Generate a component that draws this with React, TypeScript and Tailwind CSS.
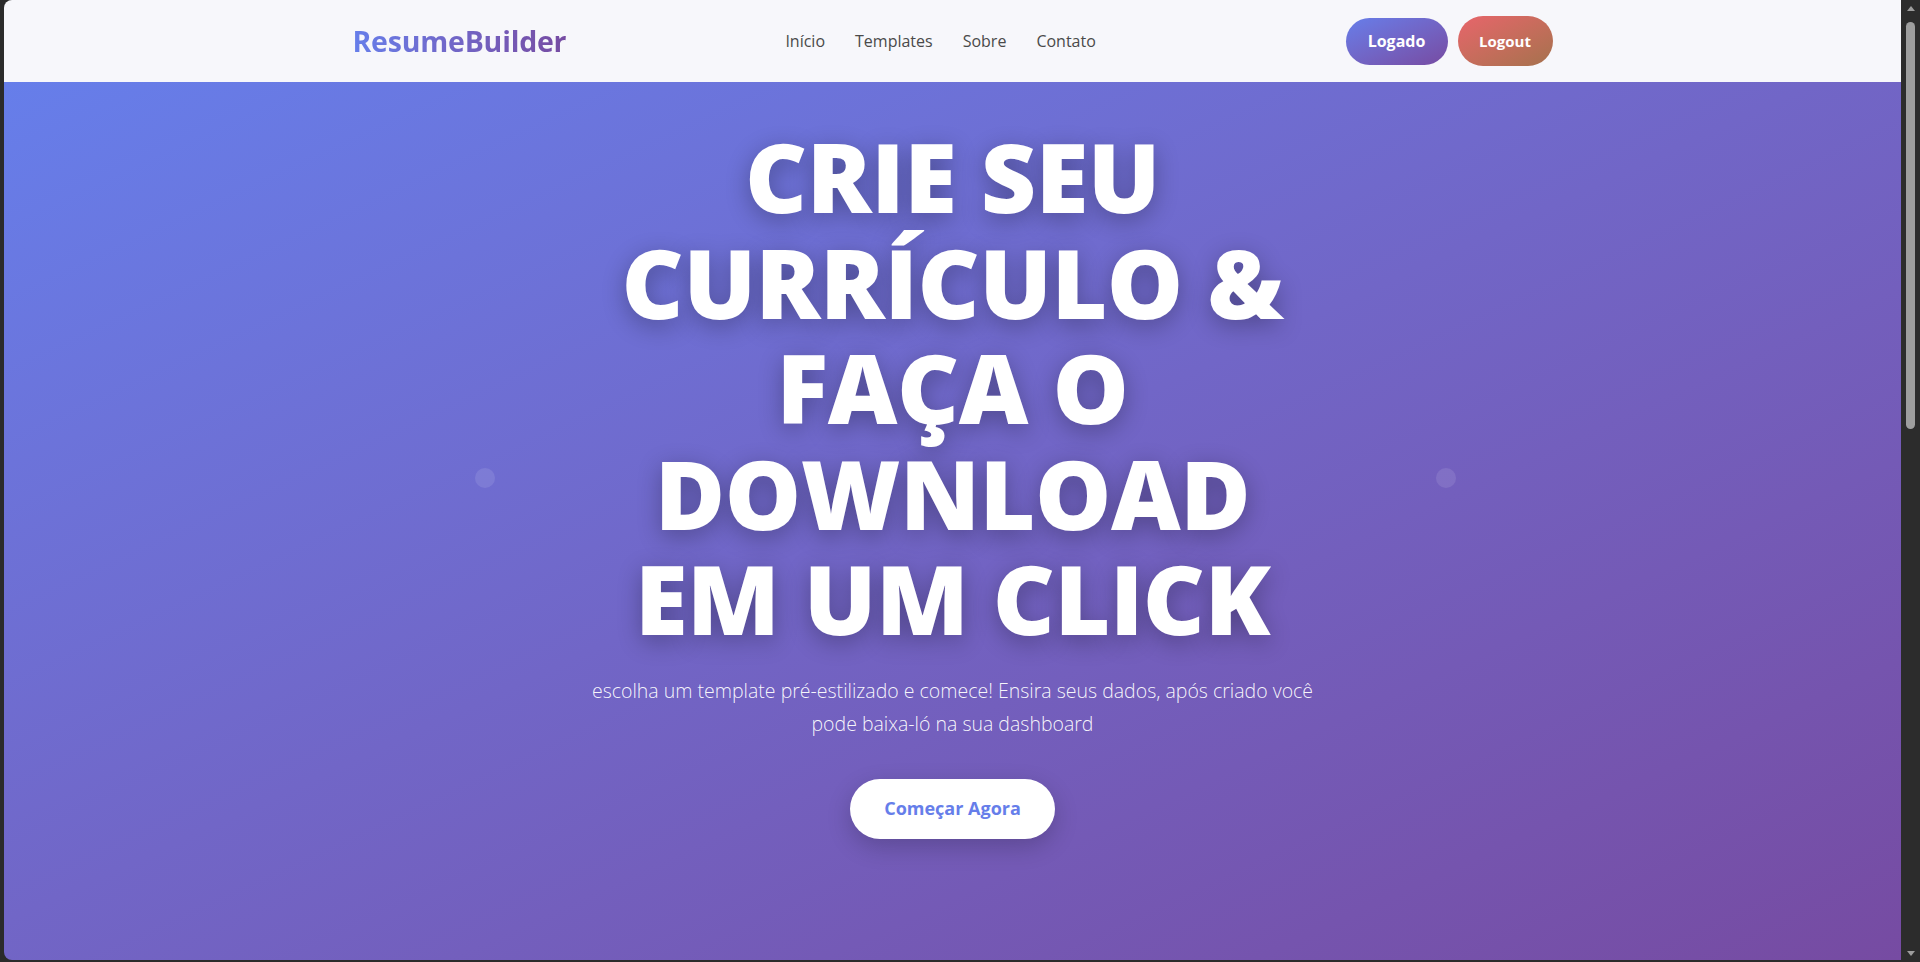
import React from 'react';

const navLinks = ['Início', 'Templates', 'Sobre', 'Contato'];

const Header: React.FC = () => (
  <header className="h-[82px] shrink-0 bg-[#f7f7fb] shadow-[0_2px_10px_rgba(0,0,0,0.05)]">
    <div className="mx-auto flex h-full w-[1200px] items-center">
      <span className="bg-gradient-to-r from-[#667eea] to-[#764ba2] bg-clip-text text-[28.5px] font-bold tracking-[-0.2px] text-transparent">
        ResumeBuilder
      </span>
      <nav className="ml-[219px] flex gap-[30px]">
        {navLinks.map((link) => (
          <a key={link} href="#" className="text-[16px] font-medium text-[#4a4a4a]">
            {link}
          </a>
        ))}
      </nav>
      <div className="ml-auto flex items-center gap-[10px]">
        <button className="h-[47px] w-[102px] rounded-full bg-gradient-to-br from-[#667eea] to-[#764ba2] text-[16px] font-bold text-white">
          Logado
        </button>
        <button className="h-[50px] w-[95px] rounded-full bg-gradient-to-br from-[#e8646b] to-[#a5714d] text-[15px] font-bold text-white">
          Logout
        </button>
      </div>
    </div>
  </header>
);

const Hero: React.FC = () => (
  <section className="relative flex flex-1 flex-col items-center bg-gradient-to-br from-[#667eea] to-[#764ba2] pt-[41px]">
    <div className="absolute left-[471px] top-[386px] h-5 w-5 rounded-full bg-white/10" />
    <div className="absolute left-[1432px] top-[386px] h-5 w-5 rounded-full bg-white/10" />
    <h1 className="text-center text-[96px] font-extrabold uppercase leading-[1.1] tracking-[-0.5px] text-white [text-shadow:0_6px_24px_rgba(0,0,0,0.3)]">
      <span className="block">Crie seu</span>
      <span className="block">currículo &amp;</span>
      <span className="block">faça o</span>
      <span className="block">download</span>
      <span className="block">em um click</span>
    </h1>
    <p className="mt-[23px] text-center text-[19.5px] font-light leading-[33px] text-white/95">
      escolha um template pré-estilizado e comece! Ensira seus dados, após criado você
      <br />
      pode baixa-ló na sua dashboard
    </p>
    <button className="mt-[39px] h-[60px] w-[205px] rounded-full bg-white text-[18px] font-bold text-[#667eea] shadow-[0_8px_24px_rgba(0,0,0,0.2)]">
      Começar Agora
    </button>
  </section>
);

const Scrollbar: React.FC = () => (
  <div className="flex w-[19px] shrink-0 flex-col items-center bg-[#2c2c2c] py-[6px]">
    <span className="h-0 w-0 border-x-[4px] border-b-[5px] border-x-transparent border-b-[#9d9d9d]" />
    <div className="mt-[11px] h-[407px] w-[9px] rounded-full bg-[#9e9e9e]" />
    <span className="mt-auto h-0 w-0 border-x-[4px] border-t-[5px] border-x-transparent border-t-[#9d9d9d]" />
  </div>
);

const App: React.FC = () => (
  <div
    className="flex h-[962px] w-[1920px] overflow-hidden bg-[#2b2b2b]"
    style={{ fontFamily: '"Open Sans", "Noto Sans", sans-serif' }}
  >
    <div className="flex flex-1 flex-col pb-[2px] pl-[4px]">
      <div className="flex flex-1 flex-col overflow-hidden rounded-tl-[8px] rounded-bl-[8px]">
        <Header />
        <Hero />
      </div>
    </div>
    <Scrollbar />
  </div>
);

export default App;
